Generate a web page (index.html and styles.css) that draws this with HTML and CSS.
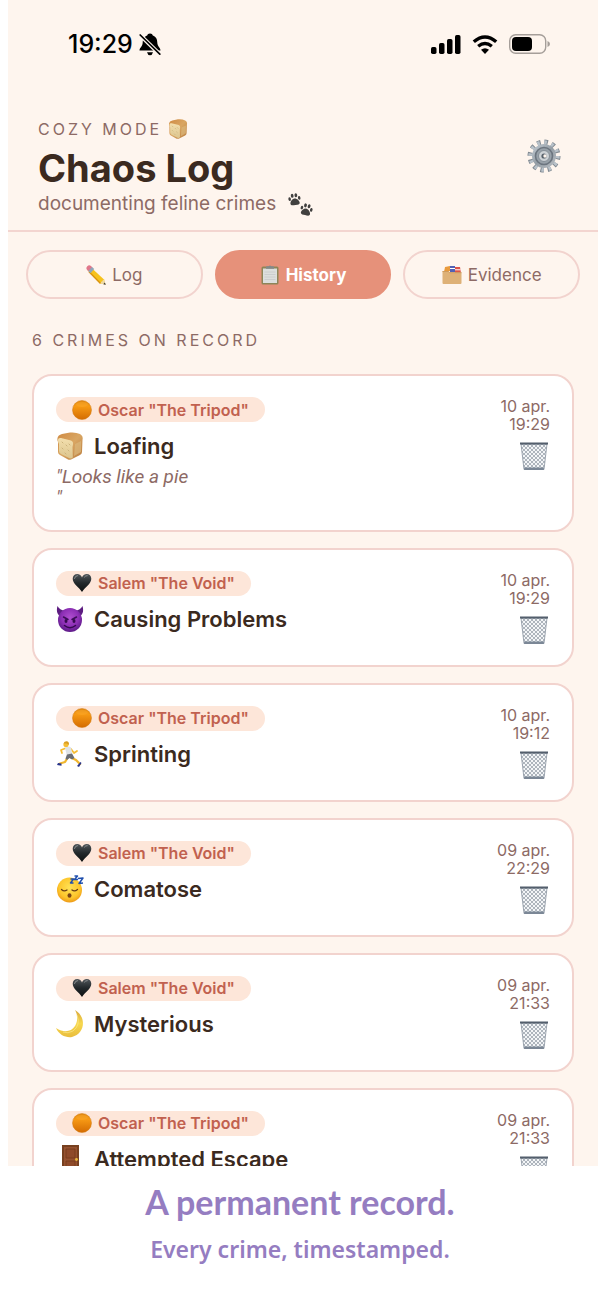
FILE: index.html
```html
<!DOCTYPE html>
<html lang="en">
<head>
    <meta charset="UTF-8">
    <meta name="viewport" content="width=device-width, initial-scale=1">
    <title>Chaos Log</title>
    <link rel="stylesheet" href="styles.css">
</head>
<body>
    <!-- shared icons -->
    <svg class="sprite" aria-hidden="true">
        <defs>
            <linearGradient id="crust" x1="0" y1="0" x2="1" y2="1">
                <stop offset="0" stop-color="#cf8a42"/>
                <stop offset="0.5" stop-color="#d9a663"/>
                <stop offset="1" stop-color="#b87a3c"/>
            </linearGradient>
            <linearGradient id="crumb" x1="0" y1="0" x2="0" y2="1">
                <stop offset="0" stop-color="#f3dfae"/>
                <stop offset="1" stop-color="#dcc58e"/>
            </linearGradient>
            <linearGradient id="orange" x1="0" y1="0" x2="0" y2="1">
                <stop offset="0" stop-color="#e08a14"/>
                <stop offset="0.3" stop-color="#f79a14"/>
                <stop offset="1" stop-color="#d46c02"/>
            </linearGradient>
            <linearGradient id="ink" x1="0" y1="0" x2="0" y2="1">
                <stop offset="0" stop-color="#50565a"/>
                <stop offset="0.5" stop-color="#22282b"/>
                <stop offset="1" stop-color="#0c0f10"/>
            </linearGradient>
            <radialGradient id="purple" cx="0.5" cy="0.4" r="0.6">
                <stop offset="0" stop-color="#b04fd0"/>
                <stop offset="0.6" stop-color="#8d2fb5"/>
                <stop offset="1" stop-color="#5d1b88"/>
            </radialGradient>
            <radialGradient id="yellow" cx="0.5" cy="0.4" r="0.6">
                <stop offset="0" stop-color="#ffe255"/>
                <stop offset="0.7" stop-color="#fdc62c"/>
                <stop offset="1" stop-color="#ee9a18"/>
            </radialGradient>
            <linearGradient id="moonlight" x1="0" y1="0" x2="0" y2="1">
                <stop offset="0" stop-color="#d9a83c"/>
                <stop offset="0.5" stop-color="#f7d84f"/>
                <stop offset="1" stop-color="#e9bd3d"/>
            </linearGradient>
            <linearGradient id="steel" x1="0" y1="0" x2="1" y2="1">
                <stop offset="0" stop-color="#c3ccd4"/>
                <stop offset="0.5" stop-color="#949da5"/>
                <stop offset="1" stop-color="#b9bfc4"/>
            </linearGradient>
            <pattern id="mesh" width="4" height="4" patternUnits="userSpaceOnUse">
                <path d="M0 0l4 4M4 0L0 4" stroke="#8f98a2" stroke-width="0.7"/>
            </pattern>
        </defs>

        <symbol id="bread" viewBox="0 0 28 28">
            <path d="M1.500 6Q2 3 6 2l8-1.500q6-.5 10 1.500 3.500 2 2.500 6L26 20q0 2-2 3l-9 4.500q-2 .5-3 0L4 23q-2-1-2-3L2 10Q1 8 1.500 6z" fill="url(#crust)"/>
            <path d="M2 8q0-2.500 3-2l10 2.500q2.500 1 2 4L16.500 15l.3 10q0 2-2.800 1.500L5 22q-2-1-2-3V12Q1.800 10 2 8z" fill="url(#crumb)"/>
            <path d="M6 10l1 1M10 13l1 1M6 16l1 1M12 18l1 1M9 21l1 1M13 12l1 1" stroke="#cbb27a" stroke-linecap="round"/>
            <path d="M19 12l6-3v11l-7 4z" fill="#dcb87c" opacity="0.7"/>
        </symbol>

        <symbol id="circle" viewBox="0 0 20 20">
            <circle cx="10" cy="10" r="9.5" fill="url(#orange)" stroke="#d17a10" stroke-width="0.5"/>
            <ellipse cx="10" cy="4.500" rx="6" ry="2.500" fill="#ffae35" opacity="0.35"/>
        </symbol>

        <symbol id="heart" viewBox="0 0 20 20">
            <path d="M10 19C7 14 .7 11 .7 5.8.7 3 2.700 1 5.200 1 7.500 1 9.300 2.300 10 4.500 10.700 2.300 12.500 1 14.800 1c2.500 0 4.500 2 4.500 4.800C19.300 11 13 14 10 19z" fill="url(#ink)"/>
            <path d="M2.500 5.500q.5-2.700 3-2.900M12.500 4q1-1.400 2.700-1.400" stroke="#8b9092" fill="none" stroke-linecap="round"/>
        </symbol>

        <symbol id="devil" viewBox="0 0 28 28">
            <path d="M1.500 1Q-.5 8 4 11l5-5Q3.500 5 1.500 1zM26.500 1q2 7-2.500 10l-5-5q5.500-1 7.500-5z" fill="#5c1c80"/>
            <circle cx="14" cy="15" r="12" fill="url(#purple)"/>
            <path d="M7.500 12l4.500 2.500M20.500 12L16 14.500" stroke="#3b0d57" stroke-width="1.500" stroke-linecap="round"/>
            <ellipse cx="10" cy="16" rx="1.500" ry="2" fill="#35094f"/>
            <ellipse cx="18" cy="16" rx="1.500" ry="2" fill="#35094f"/>
            <path d="M8.500 20.500q5.500 4.500 11 0" stroke="#35094f" stroke-width="1.600" fill="none" stroke-linecap="round"/>
        </symbol>

        <symbol id="runner" viewBox="0 0 28 28">
            <path d="M12 17l-3 5-5 1.500M14 17l6 3 4 4" stroke="#f0b62e" stroke-width="2.300" fill="none" stroke-linecap="round" stroke-linejoin="round"/>
            <path d="M9 8.500l-4 1.500 1 3M15 9l3 4 3-2" stroke="#f5bd35" stroke-width="1.800" fill="none" stroke-linecap="round" stroke-linejoin="round"/>
            <path d="M9 7.500q4-2 6 0l1.500 7-5.500 2z" fill="#dfe3e6"/>
            <path d="M11 14.500l5-1 2.500 4.500-2.500 1.500-2.500-1.500-2.500 2-1.500-1.500z" fill="#6a6d73"/>
            <circle cx="10" cy="4.500" r="2.600" fill="#f5bd35"/>
            <path d="M7.500 3.500q1-2.500 3.500-2.200Q13.500 2 12.800 5l-2-1.500z" fill="#d99d22"/>
            <path d="M2 23l3.500.5v2.300L1 25zM24.500 22l1 1-2.500 4-2-1z" fill="#27348c"/>
        </symbol>

        <symbol id="sleepy" viewBox="0 0 28 28">
            <circle cx="13.500" cy="15" r="12.500" fill="url(#yellow)"/>
            <path d="M5.500 14.500q2.500 2.500 5.500.5M16 15q2.500 2 5.500-.5" stroke="#6b3e14" stroke-width="1.300" fill="none" stroke-linecap="round"/>
            <ellipse cx="13.500" cy="20.500" rx="2" ry="2.200" fill="#7b4517"/>
            <path d="M14.500 4h3l-3 4h3M18.500 1h3l-3 3.500h3.500M22 3.500l5-.5-4 5.500 4-.5" stroke="#1f4fae" stroke-width="1.500" fill="none" stroke-linejoin="round"/>
        </symbol>

        <symbol id="moon" viewBox="0 0 28 28">
            <path d="M19 0c12 7 10 24-3 27C10 28 3 25 0 18c8 5 15 4 19-2 3-5 3-11 0-16z" fill="url(#moonlight)"/>
            <path d="M21 5q4 10-4 16-5 3-10 1" stroke="#fbe88b" fill="none" opacity="0.7"/>
        </symbol>

        <symbol id="door" viewBox="0 0 28 28">
            <path d="M6 0h17v28H6z" fill="#77401f"/>
            <path d="M8 2h13v26H8z" fill="#965130"/>
            <path d="M10 4h9v9h-9zM10 16h9v9h-9z" fill="#8f4a2a" stroke="#743b1b" stroke-width="0.800"/>
            <circle cx="20.500" cy="14.500" r="1.400" fill="#e9b93e"/>
        </symbol>

        <symbol id="basket" viewBox="0 0 28 29">
            <path d="M1 2h26l-3 25.500H4z" fill="#f3f5f7"/>
            <path d="M1 2h26l-3 25.500H4z" fill="url(#mesh)" stroke="#8a94a1" stroke-width="0.800"/>
            <path d="M4 25.500h20L23.700 28H4.300z" fill="#7b8796"/>
            <path d="M.5 1.500h27" stroke="#535e6c" stroke-width="2" stroke-linecap="round"/>
        </symbol>

        <symbol id="pencil" viewBox="0 0 20 20">
            <path d="M4.500 2L18 14.500l1.500 5-5.300-1.200L1.500 5.200z" fill="#f6c21c"/>
            <path d="M3 6.700L14.500 18.400" stroke="#d9930e" stroke-width="1.400"/>
            <path d="M1 4.800Q-.4 3 1.300 1.300T5 1l1.500 1.400L2.700 6.500z" fill="#e0768a"/>
            <path d="M6 2l2.200 2L4.500 8.200 2.300 6z" fill="#8fa6ba"/>
            <path d="M18 14.500l1.700 5.200-5.500-1.400q1-.4.900-1.600 1.500 0 1.500-1.200z" fill="#efd9a5"/>
            <path d="M18.800 17.500l1 2.300-2.500-.6z" fill="#333"/>
        </symbol>

        <symbol id="clipboard" viewBox="0 0 20 20">
            <rect x="1.500" y="1.500" width="17" height="18" rx="1.500" fill="#8d8558"/>
            <path d="M3 3.500h14v14.500H3z" fill="#dcdedd"/>
            <path d="M4.500 7h11M4.500 9.500h11M4.500 12h11M4.500 14.500h11" stroke="#c6c9ca" stroke-width="0.800"/>
            <path d="M6 3.800V2q0-.8 1-.8h1.700q1.300-1.600 2.600 0H13q1 0 1 .8v1.800z" fill="#83898a"/>
        </symbol>

        <symbol id="files" viewBox="0 0 20 20">
            <path d="M2 7l1-5 5-1 .5 5z" fill="#e99a3c"/>
            <path d="M8 1h5v6H8z" fill="#5260b4"/>
            <path d="M13 2h5l1 6h-6z" fill="#dc5348"/>
            <path d="M8 3.500h5M13 4.800h5.500" stroke="#fff"/>
            <path d="M.5 6h6l1 1.200h12V18q0 1-1 1h-17q-1 0-1-1z" fill="#deb177"/>
            <path d="M.5 6.500h6l1 1.200h12" stroke="#c99658" stroke-width="0.800" fill="none"/>
        </symbol>

        <symbol id="paw" viewBox="0 0 14 14">
            <path d="M7 6c2.500 0 5 3 5 5 0 2.400-2.700 2-5 2s-5 .4-5-2c0-2 2.500-5 5-5z"/>
            <ellipse cx="1.800" cy="6" rx="1.400" ry="2"/>
            <ellipse cx="5" cy="2.800" rx="1.500" ry="2.200"/>
            <ellipse cx="9" cy="2.800" rx="1.500" ry="2.200"/>
            <ellipse cx="12.200" cy="6" rx="1.400" ry="2"/>
        </symbol>
    </svg>

    <main class="phone">
        <div class="status-bar">
            <div class="status-time">
                <span>19:29</span>
                <svg width="22" height="23" viewBox="0 0 22 23" aria-hidden="true">
                    <path d="M11 .5c1.600 0 2.500.8 2.800 2 3.400 1.200 4.500 4 4.500 7 0 4 3.200 5 3.200 8H.5c0-3 3.200-4 3.200-8 0-3 1.100-5.800 4.500-7C8.500 1.300 9.400.5 11 .5zM8 19.300h6q-.8 3-3 3t-3-3z"/>
                    <path d="M0 1l21 20.500" stroke="#fef5ee" stroke-width="4"/>
                    <path d="M1.200 2l19.600 19.200" stroke="#000" stroke-width="1.700" stroke-linecap="round"/>
                </svg>
            </div>
            <div class="status-icons">
                <svg width="30" height="19" viewBox="0 0 30 19" aria-hidden="true">
                    <rect x="0" y="12" width="5.500" height="7" rx="1.700"/>
                    <rect x="8" y="8" width="5.500" height="11" rx="1.700"/>
                    <rect x="16" y="4" width="5.500" height="15" rx="1.700"/>
                    <rect x="24" y="0" width="5.500" height="19" rx="1.700"/>
                </svg>
                <svg width="26" height="19" viewBox="0 0 26 19" aria-hidden="true">
                    <path d="M1.800 6.800Q13-3 24.200 6.800M6.200 11.200q6.800-5.600 13.600 0" fill="none" stroke="#000" stroke-width="3.400"/>
                    <path d="M13 19l-4-4.200q4-3.200 8 0z"/>
                </svg>
                <svg width="41" height="20" viewBox="0 0 41 20" aria-hidden="true">
                    <rect x="0.700" y="0.700" width="36" height="18.600" rx="6" fill="none" stroke="#a59e99" stroke-width="1.400"/>
                    <rect x="3" y="3" width="20" height="14" rx="4"/>
                    <path d="M38.500 7q2.500 1 2.500 3t-2.500 3z" fill="#a59e99"/>
                </svg>
            </div>
        </div>

        <header class="header">
            <div>
                <p class="mode">Cozy mode <svg class="icon-small"><use href="#bread"/></svg></p>
                <h1>Chaos Log</h1>
                <p class="tagline">documenting feline crimes
                    <svg class="paws" viewBox="0 0 26 24" aria-hidden="true">
                        <g fill="#41403f">
                            <use href="#paw" width="13" height="13" transform="translate(0 1) rotate(-8 6 6)"/>
                            <use href="#paw" width="13" height="13" transform="translate(12 11) rotate(14 6 6)"/>
                        </g>
                    </svg>
                </p>
            </div>
            <button class="settings" aria-label="Settings">
                <svg viewBox="-18 -18 36 36" aria-hidden="true">
                    <circle r="14" fill="none" stroke="#7f8890" stroke-width="5" stroke-dasharray="3.500 3.830"/>
                    <circle r="13.700" fill="none" stroke="#b9c2ca" stroke-width="4" stroke-dasharray="2.500 4.673"/>
                    <circle r="12" fill="url(#steel)"/>
                    <circle r="8.500" fill="#98a1a9" stroke="#6c757f" stroke-width="1.600"/>
                    <circle r="5.500" fill="#cdd2d6" stroke="#868f97"/>
                    <circle r="2.600" fill="#59626b"/>
                    <circle cx="1" r="1.700" fill="#fef5ee"/>
                </svg>
            </button>
        </header>

        <nav class="tabs">
            <button class="tab"><svg class="icon-small"><use href="#pencil"/></svg> Log</button>
            <button class="tab active" aria-current="page"><svg class="icon-small"><use href="#clipboard"/></svg> History</button>
            <button class="tab"><svg class="icon-small"><use href="#files"/></svg> Evidence</button>
        </nav>

        <section class="history">
            <h2>6 crimes on record</h2>
            <ul class="crimes">
                <li class="card">
                    <div class="details">
                        <span class="cat"><svg class="icon-small"><use href="#circle"/></svg> Oscar "The Tripod"</span>
                        <h3><svg class="icon"><use href="#bread"/></svg> Loafing</h3>
                        <p class="note">"Looks like a pie<br>"</p>
                    </div>
                    <div class="meta">
                        <time>10 apr.<br>19:29</time>
                        <button class="delete" aria-label="Delete"><svg><use href="#basket"/></svg></button>
                    </div>
                </li>
                <li class="card">
                    <div class="details">
                        <span class="cat"><svg class="icon-small"><use href="#heart"/></svg> Salem "The Void"</span>
                        <h3><svg class="icon"><use href="#devil"/></svg> Causing Problems</h3>
                    </div>
                    <div class="meta">
                        <time>10 apr.<br>19:29</time>
                        <button class="delete" aria-label="Delete"><svg><use href="#basket"/></svg></button>
                    </div>
                </li>
                <li class="card">
                    <div class="details">
                        <span class="cat"><svg class="icon-small"><use href="#circle"/></svg> Oscar "The Tripod"</span>
                        <h3><svg class="icon"><use href="#runner"/></svg> Sprinting</h3>
                    </div>
                    <div class="meta">
                        <time>10 apr.<br>19:12</time>
                        <button class="delete" aria-label="Delete"><svg><use href="#basket"/></svg></button>
                    </div>
                </li>
                <li class="card">
                    <div class="details">
                        <span class="cat"><svg class="icon-small"><use href="#heart"/></svg> Salem "The Void"</span>
                        <h3><svg class="icon"><use href="#sleepy"/></svg> Comatose</h3>
                    </div>
                    <div class="meta">
                        <time>09 apr.<br>22:29</time>
                        <button class="delete" aria-label="Delete"><svg><use href="#basket"/></svg></button>
                    </div>
                </li>
                <li class="card">
                    <div class="details">
                        <span class="cat"><svg class="icon-small"><use href="#heart"/></svg> Salem "The Void"</span>
                        <h3><svg class="icon"><use href="#moon"/></svg> Mysterious</h3>
                    </div>
                    <div class="meta">
                        <time>09 apr.<br>21:33</time>
                        <button class="delete" aria-label="Delete"><svg><use href="#basket"/></svg></button>
                    </div>
                </li>
                <li class="card">
                    <div class="details">
                        <span class="cat"><svg class="icon-small"><use href="#circle"/></svg> Oscar "The Tripod"</span>
                        <h3><svg class="icon"><use href="#door"/></svg> Attempted Escape</h3>
                    </div>
                    <div class="meta">
                        <time>09 apr.<br>21:33</time>
                        <button class="delete" aria-label="Delete"><svg><use href="#basket"/></svg></button>
                    </div>
                </li>
            </ul>
        </section>
    </main>

    <footer class="caption">
        <p class="caption-title">A permanent record.</p>
        <p class="caption-text">Every crime, timestamped.</p>
    </footer>
</body>
</html>
```
FILE: styles.css
```css
* {
    box-sizing: border-box;
}

body {
    font-family: 'Inter', sans-serif;
    background: #fff;
    color: #3b2a20;
    height: 100vh;
    margin: 0;
    display: flex;
    flex-direction: column;
}

h1, h2, h3, p, ul {
    margin: 0;
    padding: 0;
}

button {
    font-family: inherit;
    background: none;
    border: none;
    padding: 0;
    cursor: pointer;
}

svg {
    display: block;
    flex-shrink: 0;
}

.sprite {
    position: absolute;
    width: 0;
    height: 0;
}

.icon-small {
    width: 20px;
    height: 20px;
}

.icon {
    width: 28px;
    height: 28px;
}

/* the list runs on under the caption */
.phone {
    flex: 1;
    min-height: 0;
    overflow: hidden;
    margin: 0 2px 0 8px;
    background: #fef5ee;
}

.status-bar {
    display: flex;
    justify-content: space-between;
    align-items: center;
    height: 88px;
    padding: 0 48px 0 60px;
    color: #000;
}

.status-time {
    display: flex;
    align-items: center;
    gap: 6px;
    font-size: 25px;
    font-weight: 500;
}

.status-icons {
    display: flex;
    align-items: center;
    gap: 11px;
}

.header {
    display: flex;
    justify-content: space-between;
    align-items: flex-start;
    padding: 31px 36px 12px 30px;
    border-bottom: 2px solid #f3d5d0;
}

.mode {
    display: flex;
    align-items: center;
    gap: 6px;
    font-size: 16px;
    line-height: 20px;
    letter-spacing: 3px;
    text-transform: uppercase;
    color: #8d6a65;
}

h1 {
    margin-top: 7px;
    font-size: 38px;
    line-height: 44px;
    font-weight: 700;
}

.tagline {
    display: flex;
    align-items: center;
    gap: 12px;
    font-size: 19px;
    line-height: 28px;
    color: #8d6a65;
}

.paws {
    width: 26px;
    height: 24px;
}

.settings {
    margin-top: 19px;
}

.settings svg {
    width: 36px;
    height: 36px;
}

.tabs {
    display: flex;
    gap: 12px;
    padding: 18px;
}

.tab {
    flex: 1;
    display: flex;
    justify-content: center;
    align-items: center;
    gap: 6px;
    height: 49px;
    border: 2px solid #f2d3ce;
    border-radius: 25px;
    font-size: 17px;
    color: #8d6a65;
}

.tab.active {
    background: #e6917a;
    border-color: #e6917a;
    color: #fff;
    font-weight: 700;
}

.history {
    padding: 13px 24px;
}

h2 {
    font-size: 16px;
    line-height: 20px;
    font-weight: 400;
    letter-spacing: 3px;
    text-transform: uppercase;
    color: #8d6a65;
}

.crimes {
    display: flex;
    flex-direction: column;
    gap: 16px;
    margin-top: 24px;
    list-style: none;
}

.card {
    display: flex;
    justify-content: space-between;
    padding: 20px 22px;
    background: #fff;
    border: 2px solid #f2d3ce;
    border-radius: 20px;
}

.details {
    padding-top: 1px;
}

.cat {
    display: inline-flex;
    align-items: center;
    gap: 6px;
    height: 25px;
    padding: 0 16px;
    border-radius: 13px;
    background: #fde6d9;
    color: #c1614f;
    font-size: 16px;
    font-weight: 600;
}

h3 {
    display: flex;
    align-items: center;
    gap: 10px;
    margin-top: 8px;
    font-size: 22px;
    line-height: 28px;
    font-weight: 600;
}

.note {
    padding: 6px 0 2px;
    font-family: 'Roboto', sans-serif;
    font-size: 19px;
    line-height: 21px;
    font-style: italic;
    color: #8d6a65;
}

.meta {
    display: flex;
    flex-direction: column;
    align-items: flex-end;
    padding-top: 1px;
    text-align: right;
    font-size: 16px;
    line-height: 18px;
    color: #8d6a65;
}

.delete {
    padding: 9px 2px 0 0;
}

.delete svg {
    width: 28px;
    height: 29px;
}

.caption {
    padding: 14px 20px 34px;
    text-align: center;
    color: #957dc1;
}

.caption-title {
    font-family: 'Lato', sans-serif;
    font-size: 34px;
    line-height: 44px;
    font-weight: 700;
}

.caption-text {
    margin-top: 10px;
    font-family: 'Noto Sans', sans-serif;
    font-size: 23px;
    line-height: 30px;
    font-weight: 600;
}
```
